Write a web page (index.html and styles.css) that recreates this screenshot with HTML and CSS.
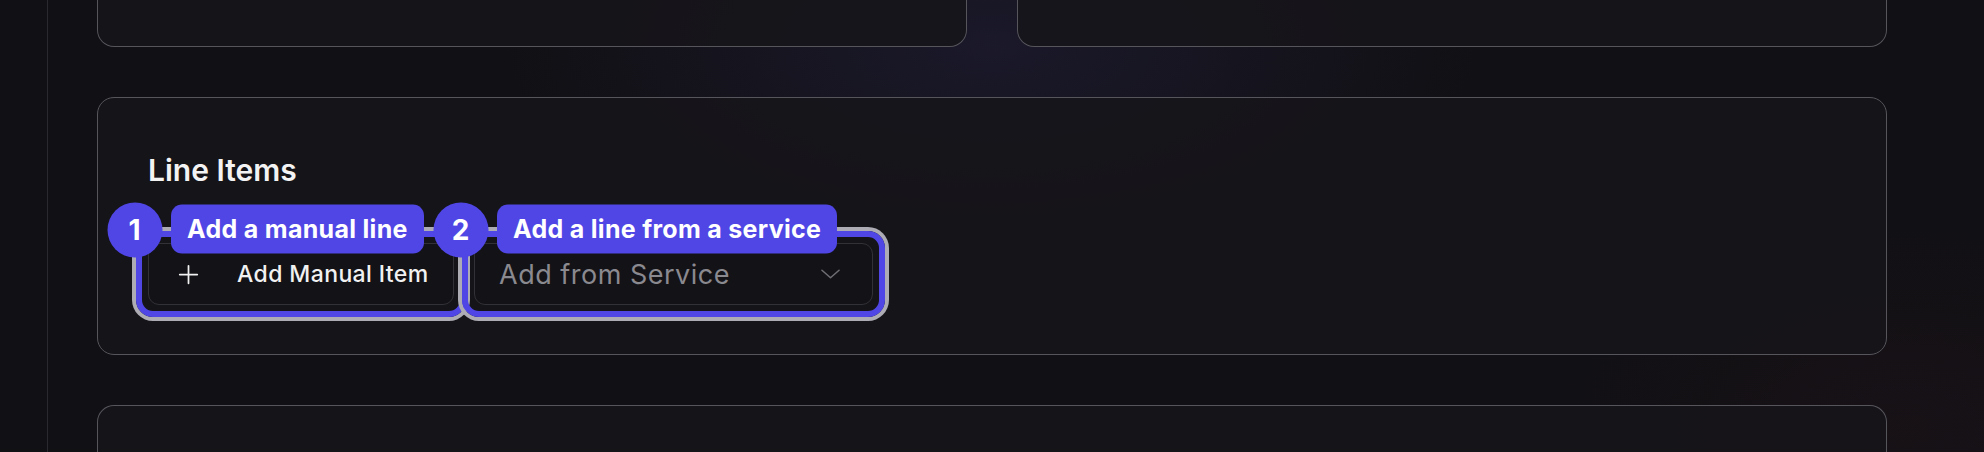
FILE: index.html
```html
<!DOCTYPE html>
<html lang="en">
<head>
    <meta charset="UTF-8">
    <meta name="viewport" content="width=device-width, initial-scale=1.0">
    <title>Invoice - Line Items</title>
    <link rel="stylesheet" href="styles.css">
</head>
<body>
    <div class="app">
        <aside class="sidebar"></aside>
        <main class="content">
            <div class="card-row">
                <section class="card card-cut"></section>
                <section class="card card-cut"></section>
            </div>

            <section class="card line-items">
                <h2 class="card-title">Line Items</h2>
                <div class="actions">
                    <div class="tour-step">
                        <span class="step-badge">1</span>
                        <span class="step-tip">Add a manual line</span>
                        <button type="button" class="btn btn-manual">
                            <svg class="icon-plus" viewBox="0 0 24 24" width="21" height="21" fill="none" stroke="currentColor" stroke-width="2" stroke-linecap="round">
                                <path d="M12 2v20M2 12h20"/>
                            </svg>
                            <span>Add Manual Item</span>
                        </button>
                    </div>
                    <div class="tour-step">
                        <span class="step-badge">2</span>
                        <span class="step-tip">Add a line from a service</span>
                        <button type="button" class="btn btn-select">
                            <span class="placeholder">Add from Service</span>
                            <svg class="icon-chevron" viewBox="0 0 20 10" width="19" height="10" fill="none" stroke="currentColor" stroke-width="1.6" stroke-linecap="round" stroke-linejoin="round">
                                <path d="M1 1l9 8 9-8"/>
                            </svg>
                        </button>
                    </div>
                </div>
            </section>

            <section class="card card-bottom"></section>
        </main>
    </div>
</body>
</html>
```

FILE: styles.css
```css
/* Global Styles */
* {
    box-sizing: border-box;
}

body {
    font-family: Inter, 'Noto Sans', sans-serif;
    margin: 0;
    padding: 0;
    height: 452px;
    overflow: hidden;
    background-color: #111014;
    background-image:
        radial-gradient(ellipse 700px 320px at 50% 10%, rgba(60, 56, 120, 0.22), transparent 70%),
        radial-gradient(ellipse 500px 300px at 96% 95%, rgba(70, 30, 40, 0.12), transparent 70%);
    color: #f2f2f3;
}

.app {
    display: grid;
    grid-template-columns: 48px 1fr;
    height: 452px;
}

/* Sidebar edge */
.sidebar {
    border-right: 1px solid #2a292f;
}

/* Main Content */
.content {
    display: flex;
    flex-direction: column;
    gap: 50px;
    padding: 0 97px 0 49px;
}

.card {
    background-color: rgba(22, 21, 26, 0.85);
    border: 1px solid #56555c;
    border-radius: 17px;
}

.card-row {
    display: grid;
    grid-template-columns: 1fr 1fr;
    gap: 50px;
}

.card-cut {
    height: 47px;
    border-top: none;
    border-radius: 0 0 17px 17px;
}

.card-bottom {
    height: 47px;
    border-bottom: none;
    border-radius: 17px 17px 0 0;
}

.line-items {
    padding: 50px 50px 49px;
}

.card-title {
    margin: 0 0 50px;
    font-size: 30px;
    line-height: 45px;
    font-weight: 600;
    color: #f3f3f4;
}

/* Buttons */
.actions {
    display: flex;
    gap: 20px;
}

.btn {
    display: flex;
    align-items: center;
    height: 62px;
    background-color: #131216;
    border: 1px solid #323137;
    border-radius: 11px;
    font-family: inherit;
    cursor: pointer;
}

.btn-manual {
    width: 306px;
    padding: 0 0 0 29px;
    gap: 38px;
    color: #f1f1f2;
    font-size: 23px;
    font-weight: 500;
    letter-spacing: 0.4px;
}

.icon-plus {
    flex-shrink: 0;
}

.btn-select {
    width: 399px;
    padding: 0 32px 0 24px;
    justify-content: space-between;
    font-size: 27px;
    font-weight: 400;
    letter-spacing: 0.5px;
}

.placeholder {
    color: #8a898f;
}

.icon-chevron {
    color: #6f6e75;
}

/* Guided tour highlight */
.tour-step {
    position: relative;
    margin: -12px;
    padding: 6px;
    border: 6px solid #4f46e5;
    border-radius: 17px;
    box-shadow: 0 0 0 4px #adacb4;
}

.step-badge {
    position: absolute;
    left: -7.5px;
    top: -7.5px;
    transform: translate(-50%, -50%);
    width: 55px;
    height: 55px;
    border-radius: 50%;
    background-color: #4f46e5;
    color: #fff;
    font-size: 28px;
    font-weight: 700;
    display: flex;
    align-items: center;
    justify-content: center;
    z-index: 2;
}

.step-tip {
    position: absolute;
    left: 29px;
    top: -8.5px;
    transform: translateY(-50%);
    height: 49px;
    padding: 0 16px;
    border-radius: 11px;
    background-color: #4f46e5;
    color: #fff;
    font-size: 25px;
    font-weight: 700;
    letter-spacing: 0.3px;
    white-space: nowrap;
    display: flex;
    align-items: center;
    z-index: 2;
}
```
